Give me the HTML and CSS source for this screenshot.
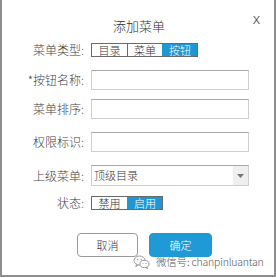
FILE: index.html
```html
<!DOCTYPE html>
<html lang="zh">
<head>
<meta charset="utf-8">
<title>添加菜单</title>
<link rel="stylesheet" href="styles.css">
</head>
<body>
<div class="dialog">
  <div class="header">
    <span class="title">添加菜单</span>
    <span class="close">X</span>
  </div>
  <div class="row r1">
    <label class="label">菜单类型:</label>
    <div class="seg">
      <span class="seg-item w36">目录</span>
      <span class="seg-item">菜单</span>
      <span class="seg-item active">按钮</span>
    </div>
  </div>
  <div class="row r2">
    <label class="label">*按钮名称:</label>
    <div class="input"></div>
  </div>
  <div class="row r3">
    <label class="label">菜单排序:</label>
    <div class="input"></div>
  </div>
  <div class="row r4">
    <label class="label">权限标识:</label>
    <div class="input"></div>
  </div>
  <div class="row r5">
    <label class="label">上级菜单:</label>
    <div class="select">
      <span class="select-text">顶级目录</span>
      <span class="select-arrow"><svg width="7" height="4" viewBox="0 0 7 4"><path d="M0 0H7L3.5 4Z" fill="#777"/></svg></span>
    </div>
  </div>
  <div class="row r6">
    <label class="label">状态:</label>
    <div class="seg">
      <span class="seg-item w36">禁用</span>
      <span class="seg-item active">启用</span>
    </div>
  </div>
  <div class="actions">
    <button class="btn btn-cancel">取消</button>
    <button class="btn btn-ok">确定</button>
  </div>
  <div class="watermark">
    <svg class="wm-icon" width="17" height="14" viewBox="0 0 17 14">
      <ellipse cx="6.5" cy="5.5" rx="5.5" ry="4.5" fill="none" stroke="#9a9a9a" stroke-width="1"/>
      <path d="M3.5 9.3L2.8 11.6L5.4 10" fill="none" stroke="#9a9a9a" stroke-width="1"/>
      <ellipse cx="11.5" cy="9" rx="4.5" ry="3.6" fill="#fff" stroke="#9a9a9a" stroke-width="1"/>
      <path d="M13.8 12.2L14.6 13.6L12.4 12.5" fill="none" stroke="#9a9a9a" stroke-width="1"/>
      <circle cx="4.6" cy="4.5" r="0.7" fill="#9a9a9a"/>
      <circle cx="8.2" cy="4.5" r="0.7" fill="#9a9a9a"/>
      <circle cx="10" cy="8.5" r="0.6" fill="#9a9a9a"/>
      <circle cx="13" cy="8.5" r="0.6" fill="#9a9a9a"/>
    </svg>
    <span class="wm-text">微信号: chanpinluantan</span>
  </div>
</div>
</body>
</html>
```

FILE: styles.css
```css
html, body {
  margin: 0;
  padding: 0;
  background: #fff;
}
body {
  width: 276px;
  height: 278px;
  font-family: "Noto Sans CJK SC", "Liberation Sans", sans-serif;
  font-weight: 300;
  color: #444;
}
.dialog {
  position: relative;
  box-sizing: border-box;
  width: 276px;
  height: 277px;
  border: 2px solid #8e8e8e;
  border-top: none;
  background: #fff;
}
.header {
  position: relative;
  height: 30px;
  padding-top: 12px;
  box-sizing: border-box;
  text-align: center;
}
.title {
  font-size: 13px;
  line-height: 18px;
  color: #333;
  display: inline-block;
  margin-left: 2px;
}
.close {
  position: absolute;
  right: 14px;
  top: 14px;
  font-family: "Liberation Sans", sans-serif;
  font-weight: 400;
  font-size: 11px;
  line-height: 12px;
  color: #555;
}
.row {
  display: flex;
  align-items: center;
}
.label {
  width: 82px;
  text-align: right;
  font-size: 12px;
  line-height: 14px;
  color: #444;
  margin-right: 7px;
  white-space: nowrap;
}
.r1 { margin-top: 13px; height: 14px; }
.r2 { margin-top: 13px; height: 20px; }
.r3 { margin-top: 9px; height: 20px; }
.r4 { margin-top: 13px; height: 20px; }
.r5 { margin-top: 13px; height: 21px; }
.r6 { margin-top: 10px; height: 14px; }

.seg {
  display: flex;
  height: 14px;
  box-sizing: border-box;
  border: 1px solid #6a6a6a;
}
.seg-item {
  width: 35px;
  box-sizing: border-box;
  font-size: 11px;
  line-height: 12px;
  text-align: center;
  color: #333;
  border-left: 1px solid #6a6a6a;
}
.seg-item:first-child {
  border-left: none;
}
.seg-item.w36 {
  width: 35px;
}
.seg-item.active {
  background: #1e97d4;
  color: #fff;
  border-left-color: #1e97d4;
}
.input {
  width: 158px;
  height: 20px;
  box-sizing: border-box;
  border: 1px solid #cfcfcf;
  border-top-color: #a8a8a8;
  background: #fff;
}
.select {
  width: 158px;
  height: 21px;
  box-sizing: border-box;
  border: 1px solid #cfcfcf;
  border-top-color: #a8a8a8;
  display: flex;
  align-items: stretch;
  background: #fff;
}
.select-text {
  flex: 1;
  font-size: 11px;
  line-height: 19px;
  padding-left: 2px;
  color: #333;
}
.select-arrow {
  width: 15px;
  background: #efefef;
  display: flex;
  align-items: center;
  justify-content: center;
}
.actions {
  margin-top: 23px;
  display: flex;
  gap: 11px;
  padding-left: 75px;
}
.btn {
  height: 24px;
  box-sizing: border-box;
  border-radius: 4px;
  font-family: "Noto Sans CJK SC", sans-serif;
  font-weight: 300;
  font-size: 11px;
  padding: 0;
  margin: 0;
}
.btn-cancel {
  width: 61px;
  background: #fff;
  border: 1px solid #9a9a9a;
  color: #333;
}
.btn-ok {
  width: 63px;
  background: #1f9ad7;
  border: 1px solid #1f9ad7;
  color: #fff;
}
.watermark {
  position: absolute;
  left: 131px;
  top: 255px;
  display: flex;
  align-items: center;
  gap: 6px;
}
.wm-icon {
  display: block;
}
.wm-text {
  font-family: "Noto Sans CJK SC", "Liberation Sans", sans-serif;
  font-size: 10.5px;
  line-height: 14px;
  color: #555;
  letter-spacing: -0.2px;
}
```
